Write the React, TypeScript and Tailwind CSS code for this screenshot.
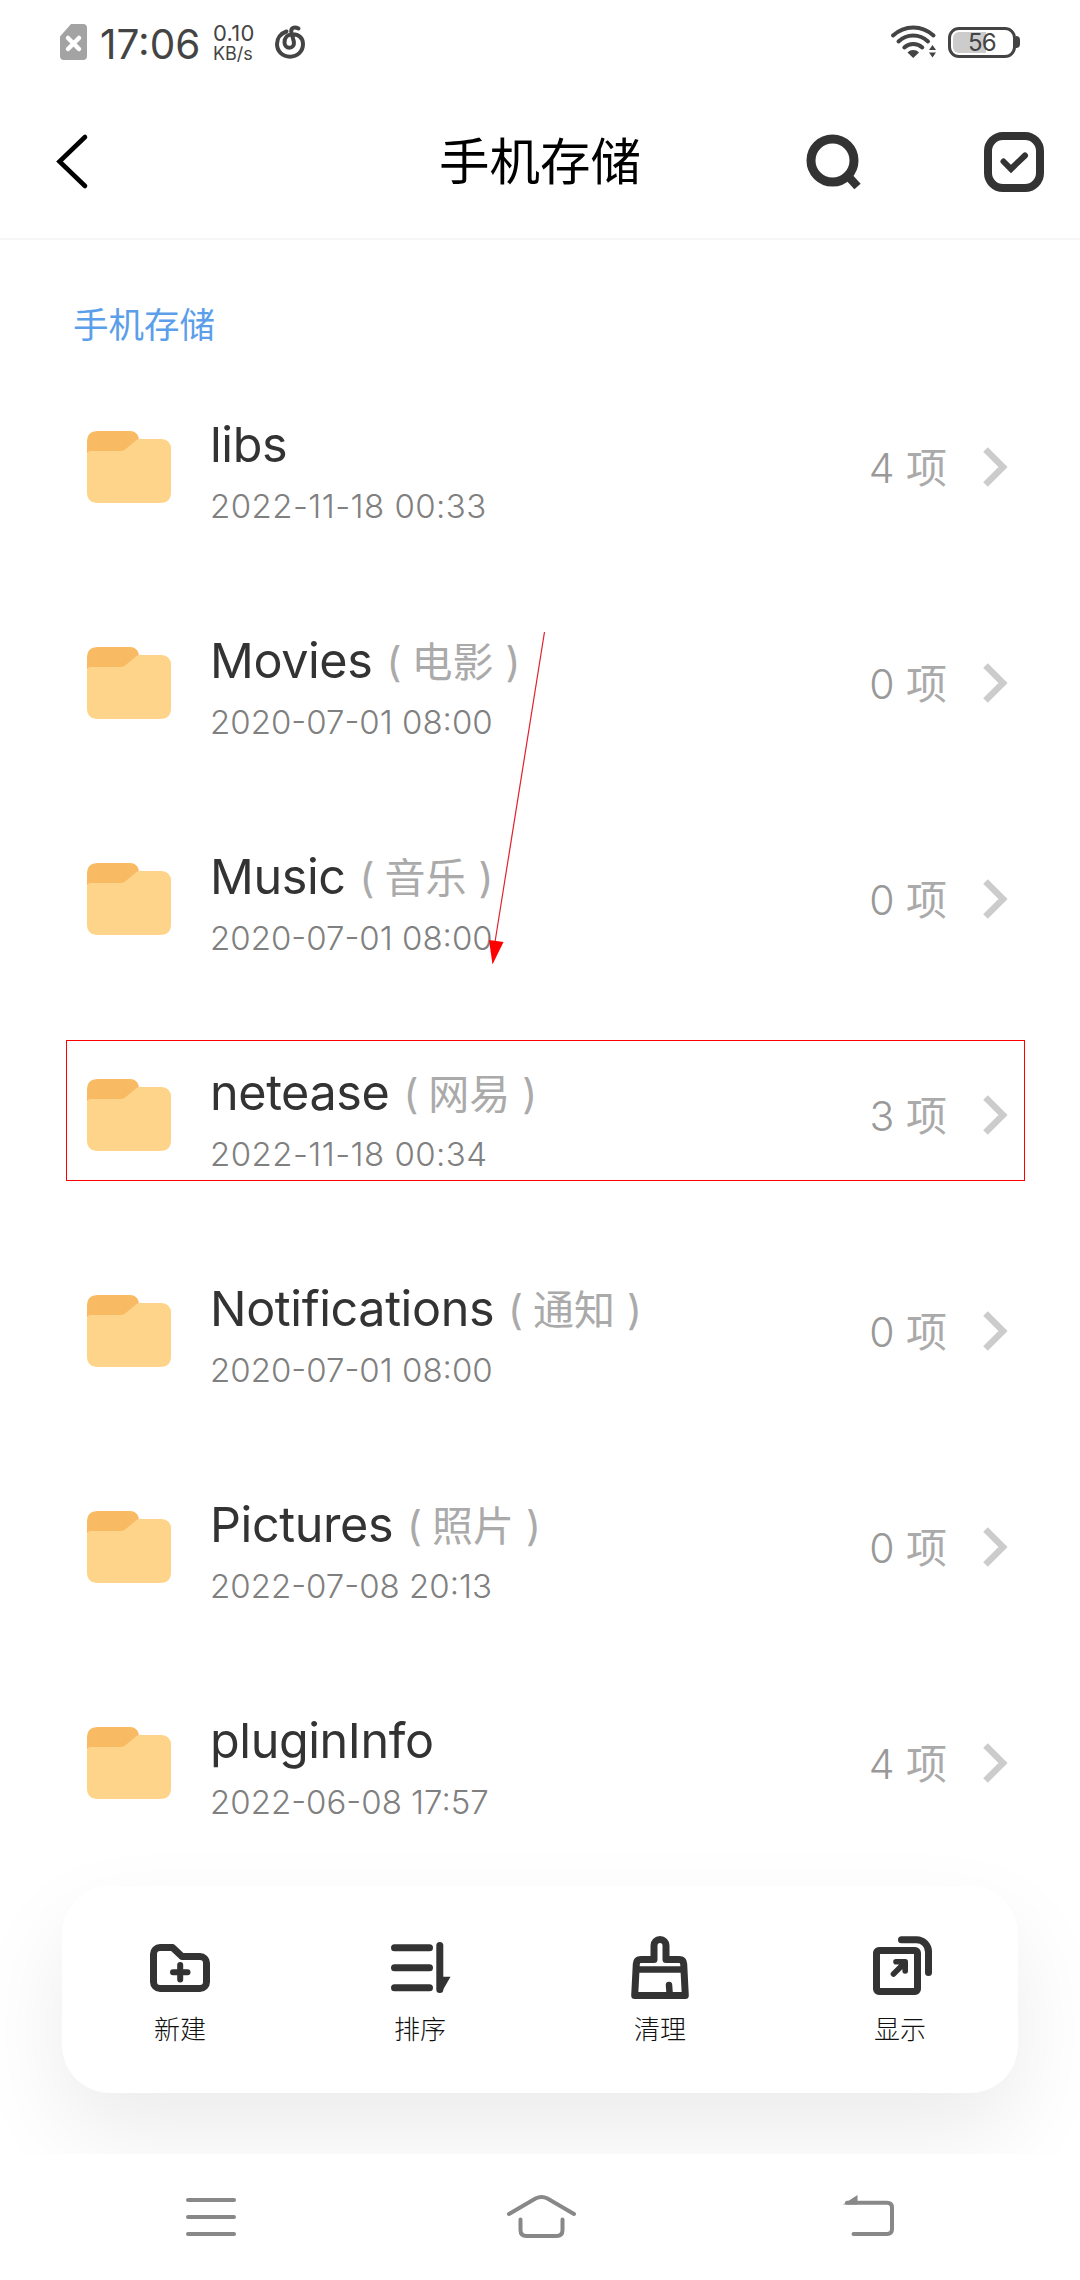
import type { ReactNode } from "react";
import clsx from "clsx";

type Folder = {
  name: string;
  alias?: string;
  date: string;
  count: number;
  marked?: boolean;
};

const folders: Folder[] = [
  { name: "libs", date: "2022-11-18 00:33", count: 4 },
  { name: "Movies", alias: "电影", date: "2020-07-01 08:00", count: 0 },
  { name: "Music", alias: "音乐", date: "2020-07-01 08:00", count: 0 },
  { name: "netease", alias: "网易", date: "2022-11-18 00:34", count: 3, marked: true },
  { name: "Notifications", alias: "通知", date: "2020-07-01 08:00", count: 0 },
  { name: "Pictures", alias: "照片", date: "2022-07-08 20:13", count: 0 },
  { name: "pluginInfo", date: "2022-06-08 17:57", count: 4 },
];

function StatusBar() {
  return (
    <div className="flex h-[84px] items-center justify-between pl-[60px] pr-[60px] text-[#444]">
      <div className="flex items-center">
        {/* SIM missing */}
        <svg className="h-9 w-[27px]" viewBox="0 0 27 36">
          <path d="M11 0H23a4 4 0 0 1 4 4V32a4 4 0 0 1-4 4H4a4 4 0 0 1-4-4V12.500Z" fill="#a3a3a3" />
          <path d="M8 14l11 11M19 14L8 25" stroke="#fff" strokeWidth="4.500" strokeLinecap="round" />
        </svg>
        <span className="ml-[13px] w-[100px] whitespace-nowrap pt-[5px] text-[40.500px] leading-[40px]">17:06</span>
        <div className="ml-[13px] w-[48px] whitespace-nowrap pt-[2px]">
          <div className="text-[22px] leading-[22px] tracking-[0.300px]">0.10</div>
          <div className="text-[18px] leading-[20px]">KB/s</div>
        </div>
        <svg className="ml-[13px] h-9 w-8" viewBox="0 0 32 36" fill="none" stroke="#444" strokeWidth="4" strokeLinecap="round">
          <path d="M12.500 7.500C6.500 9.500 3 14.500 3 20c0 7.500 5.600 12.700 13 12.700S29 27.500 29 20c0-6-4.500-10-10.500-9.800-5.500.2-8 4-8 8 0 3.400 2 5.600 4.900 5.600 3 0 5-2.500 4.500-5.800L17.300 8c-.7-3.800 2.700-6 7.200-3.500" />
        </svg>
      </div>
      <div className="flex items-center">
        <svg className="h-9 w-12" viewBox="0 0 48 36" fill="none" stroke="#444" strokeWidth="4" strokeLinecap="round">
          <path d="M3 11.500C14.500.700 32 .700 43.500 11.500M8.500 17.500c8.500-8 21-8 29.500 0M14.300 23.500c5-4.600 13-4.600 18 0" />
          <path d="M17.500 28.500c3-3.300 8.500-3.300 11.500 0l-5.800 5.500Z" fill="#444" stroke="none" />
          <path d="M39 26l3.500-5 3.500 5ZM39 28.500h7l-3.500 5Z" fill="#444" stroke="none" />
        </svg>
        <div className="ml-2.5 flex h-[31px] w-[68px] items-center rounded-[11px] border-[3.500px] border-[#444] p-[2px]">
          <div className="flex h-[21px] w-[33px] items-center rounded-l-[6px] bg-[#ccc] pl-[15px]">
            <span className="pt-px text-[24px] leading-none tracking-[-0.8px]">56</span>
          </div>
        </div>
        <div className="h-3 w-1 rounded-r-full bg-[#444]" />
      </div>
    </div>
  );
}

function Header() {
  return (
    <header className="grid h-[156px] grid-cols-3 items-center border-b-2 border-[#f6f6f6] pl-[36px] pr-[36px] pt-[2px]">
      <svg className="ml-[18px] h-[60px] w-[36px]" viewBox="0 0 36 60" fill="none" stroke="#000" strokeWidth="4.600" strokeLinecap="round">
        <path d="M31 5L5.500 29.500 31 54" />
      </svg>
      <h1 className="text-center text-[50.500px] leading-[60px] text-black">手机存储</h1>
      <div className="flex items-center justify-end gap-[120px]">
        <svg className="h-[60px] w-[60px]" viewBox="0 0 60 60" fill="none" stroke="#333">
          <circle cx="28.500" cy="28.500" r="21.500" strokeWidth="9" />
          <path d="M43 43l10.500 11.500" strokeWidth="8.500" />
        </svg>
        <svg className="h-[60px] w-[60px]" viewBox="0 0 60 60" fill="none" stroke="#333">
          <rect x="4" y="4" width="52" height="52" rx="15" strokeWidth="8" />
          <path d="M19.500 29.500l7.500 7.500L41 23.500" strokeWidth="6" strokeLinecap="round" />
        </svg>
      </div>
    </header>
  );
}

function FolderRow({ name, alias, date, count, marked }: Folder) {
  return (
    <li className="relative flex h-[216px] items-center pl-[87px] pr-[72px]">
      <svg className="h-[72px] w-[84px]" viewBox="0 0 84 72">
        <path d="M11 0H43c5 0 8 3 9 8L40 22H0V11Q0 0 11 0Z" fill="#f9ba64" />
        <path d="M52 8H75a9 9 0 0 1 9 9V61q0 11-11 11H11Q0 72 0 61V24q0-4 4-4H33.500q3 0 5.500-2.200L48.500 9.800Q50.500 8 52 8Z" fill="#fed38a" />
      </svg>
      <div className="ml-[39px] flex-1 pt-[8px]">
        <div className="flex h-16 items-start whitespace-nowrap">
          <span className="text-[48.500px] leading-[60px] tracking-[-0.400px] text-[#333]">{name}</span>
          {alias && (
            <span className="ml-3.5 flex items-baseline text-[41px] leading-[63px] text-[#aaa]">
              <span>(</span>
              <span className="ml-2.5 mr-3">{alias}</span>
              <span>)</span>
            </span>
          )}
        </div>
        <div
          className={clsx(
            "mt-[5px] text-[33px] font-light leading-[44px] text-[#808080]",
            date.includes("11-18") && "tracking-[0.450px]"
          )}
        >
          {date}
        </div>
      </div>
      <span className="pt-[2px] text-[41px] leading-[60px] text-[#aaa]">
        <span className="font-light text-[#999]">{count}</span> 项
      </span>
      <svg className="ml-[35px] h-10 w-[26px]" viewBox="0 0 26 40" fill="none" stroke="#ccc" strokeWidth="6.500">
        <path d="M3.500 2.500L21 20 3.500 37.500" />
      </svg>
      {marked && <div className="absolute left-[66px] top-[33px] h-[141px] w-[959px] border border-[#f00]" />}
    </li>
  );
}

function Tool({ label, children }: { label: string; children: ReactNode }) {
  return (
    <button className="flex w-60 shrink-0 flex-col items-center">
      <svg className="h-16 w-16" viewBox="0 0 64 64" fill="none" stroke="#333" strokeWidth="7" strokeLinecap="round" strokeLinejoin="round">
        {children}
      </svg>
      <span className="mt-[11px] text-[26px] font-light leading-[38px] text-[#111]">{label}</span>
    </button>
  );
}

function Toolbar() {
  return (
    <div className="h-[283px] px-[62px] pt-[15px]">
      <div className="flex h-[207px] justify-center rounded-[48px] bg-white pt-[50px] shadow-[0_40px_90px_rgba(0,0,0,0.08)]">
        <Tool label="新建">
          <path d="M12 11.500H24.500L34 20.500H52A6.500 6.500 0 0 1 58.500 27V46A6.500 6.500 0 0 1 52 52.500H12A6.500 6.500 0 0 1 5.500 46V18A6.500 6.500 0 0 1 12 11.500Z" />
          <path d="M25 36.300H39.500M32.200 29V43.500" strokeWidth="6" />
        </Tool>
        <Tool label="排序">
          <path d="M6.500 11.700H41.500M6.500 31.700H41.500M6.500 51.700H41.500" />
          <path d="M51.800 9.500V53.500" />
          <path d="M53 40.700H62.500L53.500 56.500Z" fill="#333" stroke="none" />
        </Tool>
        <Tool label="清理">
          <path d="M26 23.500V9.500a6 6 0 0 1 12 0V23.500H51q4.500 0 4.700 4.500L57.300 59.500H6.700L8.300 28q.2-4.500 4.700-4.500Z" />
          <path d="M9 33.500H55.500M41 49l.6 8" strokeWidth="6.500" />
        </Tool>
        <Tool label="显示">
          <rect x="8.500" y="14.500" width="41" height="41" rx="2.500" />
          <path d="M33.500 3.700H48.500a12 12 0 0 1 12 12V36.500" />
          <path d="M28 25.800H37.200V35M25.500 38L36.500 27" strokeWidth="5.600" />
        </Tool>
      </div>
    </div>
  );
}

function NavBar() {
  return (
    <nav className="relative flex h-[126px] items-start justify-between bg-white pl-[183px] pr-[182px] pt-[36px]">
      <svg className="h-[54px] w-14" viewBox="0 0 56 54" fill="none" stroke="#888" strokeWidth="4" strokeLinecap="round">
        <path d="M5 10H51M5 27H51M5 44H51" />
      </svg>
      <svg className="h-[54px] w-20" viewBox="0 0 80 54" fill="none" stroke="#888" strokeWidth="4" strokeLinecap="round">
        <path d="M10 24L36.500 8.500Q42.500 5.500 48.500 8.500L75 24M21.500 29.500V40q0 6 6 6H57.500q6 0 6-6V29.500" />
      </svg>
      <svg className="h-[54px] w-[60px]" viewBox="0 0 60 54" fill="none" stroke="#888" strokeWidth="4" strokeLinecap="round">
        <path d="M9 12.700H49q5 0 5 5V39q0 5-5 5H15.500" />
        <path d="M5 14.500L19.500 5V14.500Z" fill="#888" stroke="none" />
      </svg>
    </nav>
  );
}

export default function App() {
  return (
    <div className="relative h-[2280px] w-[1080px] overflow-hidden bg-white font-['Inter','Noto_Sans_CJK_SC',sans-serif]">
      <StatusBar />
      <Header />
      <h2 className="h-[119px] pl-[73px] pt-[62px] text-[35.500px] leading-[48px] text-[#5b9eea]">手机存储</h2>
      <ul>
        {folders.map((folder) => (
          <FolderRow key={folder.name} {...folder} />
        ))}
      </ul>
      <Toolbar />
      <NavBar />

      {/* Pointer to the netease folder */}
      <svg className="absolute left-[480px] top-[625px] h-[345px] w-[75px]" viewBox="480 625 75 345">
        <path d="M544.500 632L495 942" stroke="#e0202c" strokeWidth="1.200" />
        <path d="M489 940L503.500 942 492.500 964.500Z" fill="#f00" />
      </svg>
    </div>
  );
}
